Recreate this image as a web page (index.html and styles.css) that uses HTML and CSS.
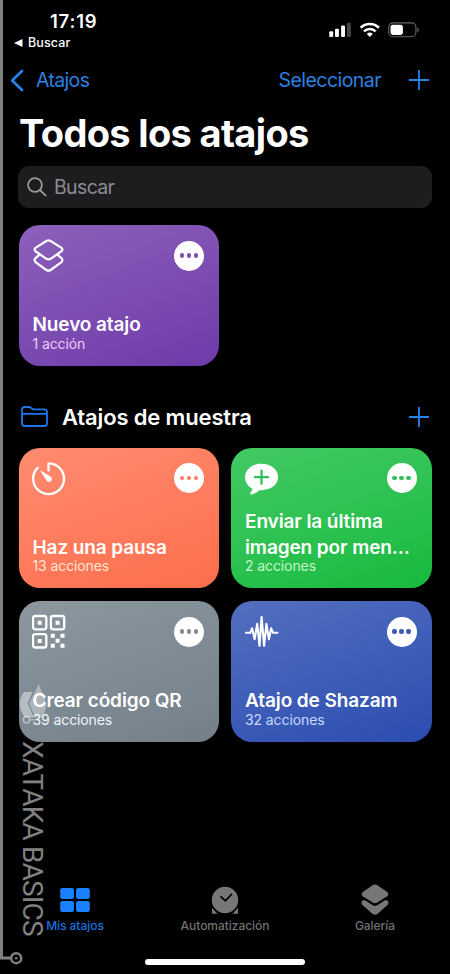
FILE: index.html
```html
<!DOCTYPE html>
<html lang="es">
<head>
<meta charset="utf-8">
<title>Todos los atajos</title>
<link rel="stylesheet" href="styles.css">
</head>
<body>
<div class="phone">
  <header class="status">
    <div class="status-left">
      <div class="time">17:19</div>
      <div class="return"><svg width="9" height="8" viewBox="0 0 9 8"><path d="M0 4 8.5 0v8z" fill="#fff"/></svg><span>Buscar</span></div>
    </div>
    <svg class="status-icons" width="92" height="17" viewBox="0 0 92 17">
      <g fill="#fff"><rect x=".3" y="9.3" width="3.9" height="5.7" rx="1"/><rect x="6" y="6.8" width="3.9" height="8.2" rx="1"/><rect x="12.1" y="3.6" width="3.9" height="11.4" rx="1"/></g>
      <rect x="18" y=".8" width="3.9" height="14.2" rx="1" fill="#444"/>
      <g fill="none" stroke="#fff" stroke-width="2.6"><path d="M31.7 5.7a13 13 0 0 1 18.2 0"/><path d="M35 9.4a8.2 8.2 0 0 1 11.6 0"/></g>
      <path d="M37.8 11.9a4.4 4.4 0 0 1 6 0l-3 3z" fill="#fff"/>
      <rect x="59.7" y=".9" width="27.2" height="13.8" rx="4.2" fill="none" stroke="#666" stroke-width="1.1"/>
      <rect x="61.5" y="2.7" width="12.4" height="10.2" rx="2.4" fill="#fff"/>
      <path d="M88.3 5.4v4.8q1.6-.6 1.6-2.4t-1.6-2.4" fill="#666"/>
    </svg>
  </header>
  <nav class="nav">
    <svg width="14" height="23" viewBox="0 0 14 23"><path d="M12 2 2.2 11.5 12 21" fill="none" stroke="#2684ee" stroke-width="2.7" stroke-linecap="round" stroke-linejoin="round"/></svg>
    <span class="back">Atajos</span>
    <span class="select">Seleccionar</span>
    <svg class="plus" width="20" height="20" viewBox="0 0 20 20"><path d="M10 .5v19M.5 10h19"/></svg>
  </nav>
  <h1>Todos los atajos</h1>
  <div class="search">
    <svg width="20" height="20" viewBox="0 0 20 20"><circle cx="8" cy="8" r="6.9"/><path d="m13 13 5.7 5.6"/></svg>
    <span>Buscar</span>
  </div>
  <main>
    <div class="grid">
      <article class="card purple">
        <div class="card-top">
          <svg class="glyph" width="34" height="36" viewBox="0 0 34 36" fill="none" stroke="#fff" stroke-width="2.2" stroke-linejoin="round"><path d="M14.400 3Q16.500 1.900 18.600 3l10.600 6.600q2.500 1.900 0 3.900l-10.600 7.300q-2.100 1.200-4.200 0L3.800 13.500q-2.500-2 0-3.900z"/><path d="M7.500 16.700 3.800 19.900q-2.500 2.200 0 4.400l10.600 7.700q2.100 1.400 4.200 0l10.600-7.700q2.500-2.200 0-4.400L25.500 16.700"/></svg>
          <span class="more"><i></i><i></i><i></i></span>
        </div>
        <h3>Nuevo atajo</h3><p>1 acción</p>
      </article>
    </div>
    <div class="section">
      <svg width="27" height="22" viewBox="0 0 27 22" fill="none" stroke="#1a78e8" stroke-width="1.8"><path d="M1 17.3V3.8Q1 1 3.8 1h4.1q1.2 0 2.1.9l1 .8q.7.6 1.8.6h10.3Q26 3.3 26 6.2v11.1q0 2.7-2.8 2.7H3.8Q1 20 1 17.3zM1 7.9h25"/></svg>
      <h2>Atajos de muestra</h2>
      <svg class="plus" width="20" height="20" viewBox="0 0 20 20"><path d="M10 .5v19M.5 10h19"/></svg>
    </div>
    <div class="grid">
      <article class="card orange">
        <div class="card-top">
          <svg class="glyph" width="34" height="36" viewBox="0 0 34 36"><path d="M16.5 9.6V2.3A15.4 15.4 0 1 1 5.6 6.9" fill="none" stroke="#fff" stroke-width="2.3" stroke-linecap="round" stroke-linejoin="round"/><path d="m8.800 9.900 10 6.200a2.600 2.600 0 1 1-3.700 3.700z" fill="#fff" stroke="#fff" stroke-width=".7" stroke-linejoin="round"/></svg>
          <span class="more"><i></i><i></i><i></i></span>
        </div>
        <h3>Haz una pausa</h3><p>13 acciones</p>
      </article>
      <article class="card green">
        <div class="card-top">
          <svg class="glyph" width="34" height="36" viewBox="0 0 34 36"><path d="M16.5 2.8c9.2 0 16.600 5.700 16.600 13.300S25.700 29.200 16.500 29.200h-2.100c-2 2-4.800 3.600-7.800 4.200-1.200.2-1.700-.9-1-1.800 1-1.300 1.700-2.400 1.700-3.800C2.700 25.400 0 21.200 0 16.100 0 8.500 7.300 2.800 16.500 2.800z" fill="#fff"/><path d="M16.5 9.600v13.200M9.900 16.200h13.200" stroke="#31c157" stroke-width="2.3" stroke-linecap="round"/></svg>
          <span class="more"><i></i><i></i><i></i></span>
        </div>
        <h3>Enviar la última<br>imagen por men...</h3><p>2 acciones</p>
      </article>
      <article class="card gray">
        <div class="card-top">
          <svg class="glyph" width="34" height="36" viewBox="0 0 34 36"><g fill="none" stroke="#fff" stroke-width="2.3"><rect x="1" y="2" width="13.300" height="13.300" rx="2.200"/><rect x="18.900" y="2" width="13.300" height="13.300" rx="2.200"/><rect x="1" y="20.200" width="13.300" height="13.300" rx="2.200"/></g><path fill="#fff" d="M5.700 6.700h4v4h-4zM23.600 6.700h4v4h-4zM5.700 24.900h4v4h-4zM18.800 19.800h4v4h-4zM28.500 19.800h4v4h-4zM23.600 24.800h4v4h-4zM18.800 29.800h4v4h-4zM28.500 29.800h4v4h-4z"/></svg>
          <span class="more"><i></i><i></i><i></i></span>
        </div>
        <h3>Crear código QR</h3><p>39 acciones</p>
      </article>
      <article class="card blue">
        <div class="card-top">
          <svg class="glyph" width="34" height="36" viewBox="0 0 34 36"><path d="M.8 18.800h4.500l1.800-4.500 2.500 11 2.600-15.500 2.300 22 2.100-29 2.500 29 2.300-22 2.500 15.500 2.300-11 1.900 4.500h4.300" fill="none" stroke="#fff" stroke-width="2.100" stroke-linecap="round" stroke-linejoin="round"/></svg>
          <span class="more"><i></i><i></i><i></i></span>
        </div>
        <h3>Atajo de Shazam</h3><p>32 acciones</p>
      </article>
    </div>
  </main>
  <footer class="tabs">
    <div class="tab active">
      <svg width="32" height="34" viewBox="0 0 32 34" fill="#1b80fb"><rect x="1.200" y="5" width="13.800" height="11" rx="2.200"/><rect x="17" y="5" width="13.800" height="11" rx="2.200"/><rect x="1.200" y="18" width="13.800" height="11" rx="2.200"/><rect x="17" y="18" width="13.800" height="11" rx="2.200"/></svg>
      <span>Mis atajos</span>
    </div>
    <div class="tab">
      <svg width="32" height="34" viewBox="0 0 32 34"><path fill="#777" d="M3 24.500 8.500 30.800H3zM29 24.500 23.500 30.800H29z"/><circle cx="16" cy="17" r="14" fill="#777" stroke="#000" stroke-width="1.500"/><path d="m12 13.600 4.400 4.300 6.100-6.600" fill="none" stroke="#000" stroke-width="1.700" stroke-linecap="round" stroke-linejoin="round"/></svg>
      <span>Automatización</span>
    </div>
    <div class="tab">
      <svg width="32" height="34" viewBox="0 0 32 34" fill="#777"><path d="M3.800 17.500q1.300-.9 2.500 0l7.500 4.700q2.200 1.400 4.400 0l7.500-4.700q1.200-.9 2.500 0 2.600 2 0 4.700L18.400 31q-2.400 1.500-4.800 0L3.800 22.200q-2.600-2.700 0-4.700z"/><path d="M13.600 2.200q2.400-1.300 4.800 0l9.800 6.700q2.300 2.300 0 4.400l-9.800 6.300q-2.400 1.300-4.800 0l-9.800-6.300q-2.300-2.100 0-4.400z"/></svg>
      <span>Galería</span>
    </div>
  </footer>
  <div class="home"></div>

  <svg class="frame" width="27" height="974" viewBox="0 0 27 974"><path d="M1.500 0V958H10.500" fill="none" stroke="#808080" stroke-width="3"/><circle cx="16.200" cy="958.200" r="5" fill="none" stroke="#808080" stroke-width="2.500"/><circle cx="16.200" cy="958.200" r="1.300" fill="#808080"/></svg>
  <svg class="brand" width="34" height="44" viewBox="0 0 34 44"><path d="M5 8h8.500L8.500 19.500 15 33.500H6Q1 27 1 20T5 8z" fill="#fff" opacity=".43"/><path d="M19.500 0 24 10.500Q28 17 27 23t-4.500 10.500h-6L10 19.500 16 8z" fill="#fff" opacity=".36"/><path d="M10.500 35.800H20" stroke="#fff" stroke-width="1.500" opacity=".4"/><circle cx="7.500" cy="35.800" r="3.200" fill="none" stroke="#fff" stroke-width="1.500" opacity=".45"/></svg>
  <div class="watermark">XATAKA BASICS</div>
</div>
</body>
</html>
```
FILE: styles.css
```css
* { box-sizing: border-box; margin: 0; padding: 0; }
body { background: #000; }
.phone {
  position: relative;
  width: 450px;
  height: 974px;
  overflow: hidden;
  display: flex;
  flex-direction: column;
  background: #000;
  color: #fff;
  font-family: Inter, "Liberation Sans", sans-serif;
  white-space: nowrap;
}
svg { display: block; flex: none; }
.status { height: 56px; display: flex; justify-content: space-between; padding: 11px 29px 0 14px; }
.time { margin-left: 36px; font-size: 18.5px; line-height: 20px; font-weight: 600; letter-spacing: .8px; }
.return { display: flex; align-items: center; gap: 5px; margin-top: 5px; font-size: 12.5px; line-height: 14px; font-weight: 500; letter-spacing: .1px; }
.status-icons { margin-top: 11px; }
.nav { height: 48px; display: flex; align-items: center; padding: 0 21px 0 10px; color: #2b80e2; font-size: 19.5px; }
.back { margin-left: 12px; letter-spacing: -.65px; }
.select { margin-left: auto; margin-right: 28px; letter-spacing: -.55px; }
.plus { fill: none; stroke: #2684ee; stroke-width: 1.8; stroke-linecap: round; }
h1 { height: 62px; padding-left: 19px; font-size: 38px; line-height: 58.5px; font-weight: 700; letter-spacing: -.66px; }
.search { height: 42px; margin: 0 18px; padding-left: 9px; border-radius: 11px; background: #1d1d20; display: flex; align-items: center; gap: 7px; color: #8c8c92; font-size: 19.5px; letter-spacing: -.65px; }
.search svg { fill: none; stroke: #99999e; stroke-width: 1.8; stroke-linecap: round; }
main { padding: 17px 18px 0 18.5px; }
.grid { display: grid; grid-template-columns: 200.5px 200.5px; grid-auto-rows: 140.5px; gap: 13px 12px; }
.card { border-radius: 21px; padding: 13px 15px 0 14px; display: flex; flex-direction: column; }
.card-top { display: flex; justify-content: space-between; }
.glyph { margin-left: -.5px; }
.more { width: 30px; height: 30px; margin-top: 2.5px; border-radius: 50%; background: #fff; display: flex; align-items: center; justify-content: center; gap: 2.8px; }
.more i { width: 4.2px; height: 4.2px; border-radius: 50%; background: var(--dot); }
h3 { margin-top: auto; font-size: 19px; line-height: 25.5px; font-weight: 600; letter-spacing: -.1px; }
.card p { font-size: 14px; line-height: 16px; margin: -2px 0 14px; color: var(--sub); letter-spacing: -.1px; }
.purple { --dot: #8150b4; --sub: #efcfff; background: linear-gradient(160deg, #8c60bb, #6e3ba9); }
.orange { --dot: #fd7d5e; --sub: #ffe5d3; background: linear-gradient(160deg, #ff8b70, #fd6e4b); }
.green { --dot: #34bf59; --sub: #c5f8cb; background: linear-gradient(160deg, #43c965, #18ba3f); }
.gray { --dot: #808b94; --sub: #f2f5f7; background: linear-gradient(160deg, #8c979f, #73808a); }
.blue { --dot: #405bb5; --sub: #c8daff; background: linear-gradient(160deg, #536fbf, #2b4db1); }
.section { height: 82px; display: flex; align-items: center; padding: 20px 3px 0 2.5px; }
.section h2 { margin-left: 14px; font-size: 22px; font-weight: 600; line-height: 28px; letter-spacing: -.15px; }
.section .plus { margin-left: auto; }
.tabs { margin: auto 0 0; height: 76px; display: grid; grid-template-columns: repeat(3, 1fr); color: #727272; font-size: 12px; line-height: 16px; font-weight: 500; letter-spacing: -.05px; }
.tab { display: flex; flex-direction: column; align-items: center; }
.tab span { margin-top: 1px; }
.active { color: #1972de; }
.home { width: 160px; height: 5.5px; margin: 0 auto 9.5px; border-radius: 3px; background: #fff; }
.frame { position: absolute; left: 0; top: 0; }
.brand { position: absolute; left: 18.5px; top: 684px; }
.watermark { position: absolute; left: 15.5px; top: 741px; width: 32px; line-height: 32px; writing-mode: vertical-rl; font-family: Roboto, sans-serif; font-size: 28px; letter-spacing: -.83px; color: #808080; }
```
